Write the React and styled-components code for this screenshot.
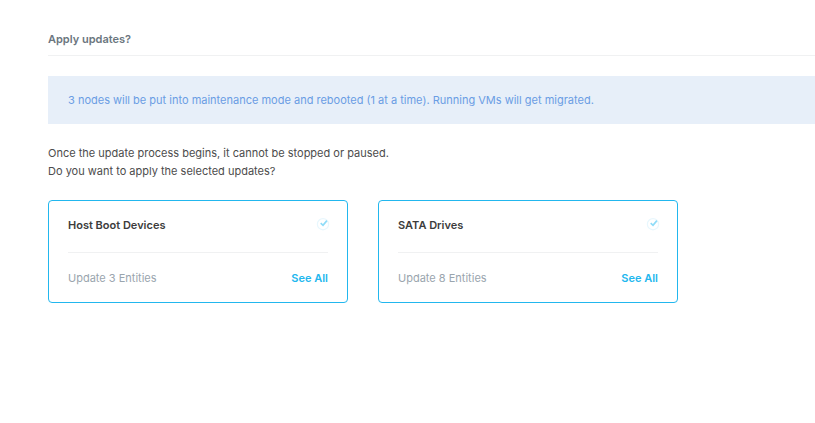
import React from "react";
import styled, { createGlobalStyle } from "styled-components";

const updates = [
  { name: "Host Boot Devices", entities: 3 },
  { name: "SATA Drives", entities: 8 },
];

const SelectedIcon = () => (
  <svg width="12" height="14" viewBox="0 0 12 14" overflow="visible" fill="none" role="img" aria-label="Selected">
    <circle cx="7" cy="6.2" r="5.6" stroke="#e8f7fd" strokeWidth="1.2" />
    <path d="M4.7 5.2 L7 7.3 L10.9 2.6" stroke="#8fdcf8" strokeWidth="1.7" />
  </svg>
);

const App = () => {
  return (
    <Page>
      <GlobalStyle />
      <Title>Apply updates?</Title>
      <Banner role="status">
        3 nodes will be put into maintenance mode and rebooted (1 at a time).
        Running VMs will get migrated.
      </Banner>
      <Message>
        Once the update process begins, it cannot be stopped or paused.
        <br />
        Do you want to apply the selected updates?
      </Message>
      <CardList>
        {updates.map((update) => (
          <Card key={update.name}>
            <CardHeader>
              <CardTitle>{update.name}</CardTitle>
              <SelectedIcon />
            </CardHeader>
            <CardFooter>
              <span>Update {update.entities} Entities</span>
              <SeeAll href="#">See All</SeeAll>
            </CardFooter>
          </Card>
        ))}
      </CardList>
    </Page>
  );
};

export default App;

const GlobalStyle = createGlobalStyle`
  * {
    box-sizing: border-box;
  }

  body {
    margin: 0;
    background: #fff;
    color: #4c4c4c;
    font-family: Inter, sans-serif;
    font-size: 11px;
    line-height: 18px;
  }
`;

const Page = styled.main`
  padding: 30px 0 30px 48px;
`;

const Title = styled.h1`
  margin: 0 0 20px;
  padding-bottom: 7px;
  border-bottom: 1px solid #f0f1f2;
  color: #6b767e;
  font-size: 11px;
  font-weight: 600;
  line-height: 18px;
`;

const Banner = styled.div`
  padding: 15px 20px;
  background: #e7eff9;
  color: #6a9de4;
`;

const Message = styled.p`
  margin: 20px 0;
`;

const CardList = styled.div`
  display: flex;
  flex-wrap: wrap;
  gap: 30px;
`;

const Card = styled.section`
  width: 300px;
  padding: 0 19px;
  border: 1px solid #22b7ee;
  border-radius: 4px;
`;

const CardHeader = styled.div`
  display: flex;
  align-items: center;
  justify-content: space-between;
  height: 52px;
  padding-bottom: 4px;
  border-bottom: 1px solid #f0f1f2;
`;

const CardTitle = styled.h2`
  margin: 0;
  color: #3c3c3c;
  font-size: 11px;
  font-weight: 600;
`;

const CardFooter = styled.div`
  display: flex;
  align-items: center;
  justify-content: space-between;
  height: 49px;
  color: #9aa5ae;
`;

const SeeAll = styled.a`
  color: #22b7ee;
  font-weight: 600;
  text-decoration: none;
`;
